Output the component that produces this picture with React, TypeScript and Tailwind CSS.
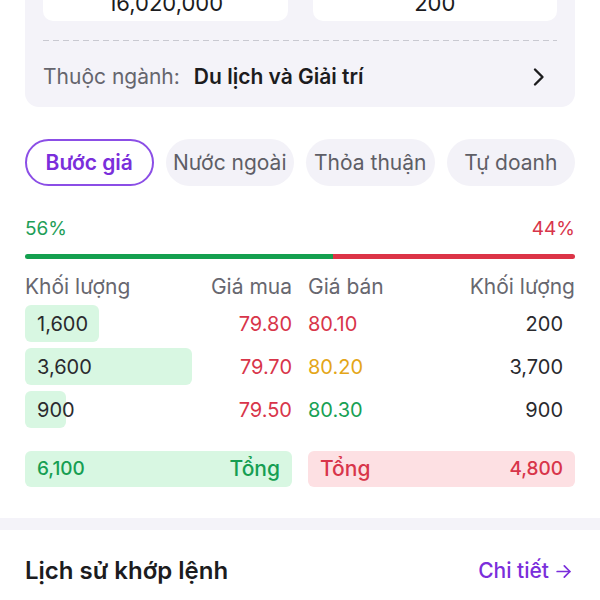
import React from "react";

const rows = [
  { bv: "1,600", bw: 74, bp: "79.80", sp: "80.10", spc: "text-[#d8354a]", sv: "200" },
  { bv: "3,600", bw: 167, bp: "79.70", sp: "80.20", spc: "text-[#e4a618]", sv: "3,700" },
  { bv: "900", bw: 41, bp: "79.50", sp: "80.30", spc: "text-[#17a154]", sv: "900" },
];

const tabs = ["Bước giá", "Nước ngoài", "Thỏa thuận", "Tự doanh"];

export default function App() {
  return (
    <div
      className="w-[600px] h-[600px] overflow-hidden bg-white"
      style={{ fontFamily: "Inter, 'Noto Sans', sans-serif" }}
    >
      {/* Top card */}
      <div className="mx-[25px] mt-[-41px] rounded-[14px] bg-[#f4f3f9] px-[18px] pt-[18px]">
        <div className="grid grid-cols-2 gap-[25px]">
          <div className="h-[44px] rounded-[10px] bg-white flex items-end justify-center pb-[7px]">
            <span className="text-[22px] leading-none text-[#1c1c1e]">16,020,000</span>
          </div>
          <div className="h-[44px] rounded-[10px] bg-white flex items-end justify-center pb-[7px]">
            <span className="text-[22px] leading-none text-[#1c1c1e]">200</span>
          </div>
        </div>
        <div className="mt-[19px] h-px bg-[linear-gradient(to_right,#c9c9d1_60%,transparent_60%)] bg-[length:10px_1px]" />
        <div className="h-[66px] pt-[5px] flex items-center">
          <span className="text-[21px] text-[#65656d]">Thuộc ngành:</span>
          <span className="ml-[14px] text-[21px] font-semibold text-[#1c1c1e]">Du lịch và Giải trí</span>
          <svg
            className="ml-auto mr-[12px]"
            width="13"
            height="20"
            viewBox="0 0 13 20"
            fill="none"
            stroke="#1c1c1e"
            strokeWidth="2.4"
            strokeLinecap="round"
            strokeLinejoin="round"
          >
            <path d="M3 2.5 L10.5 10 L3 17.5" />
          </svg>
        </div>
      </div>

      {/* Tabs */}
      <div className="mx-[25px] mt-[32px] grid grid-cols-4 gap-[12px]">
        {tabs.map((t, i) =>
          i === 0 ? (
            <div
              key={t}
              className="h-[47px] rounded-full border-2 border-[#8b4ee6] bg-white flex items-center justify-center text-[21px] font-semibold text-[#7a2edb]"
            >
              {t}
            </div>
          ) : (
            <div
              key={t}
              className="h-[47px] rounded-full bg-[#f3f2f8] flex items-center justify-center text-[21px] text-[#5e5e66]"
            >
              {t}
            </div>
          )
        )}
      </div>

      {/* Percent */}
      <div className="mx-[25px] mt-[31px] flex justify-between text-[19px] leading-[24px]">
        <span className="text-[#1e9e58]">56%</span>
        <span className="text-[#d8354a]">44%</span>
      </div>
      <div className="mx-[25px] mt-[13px] flex h-[5px]">
        <div className="h-full w-[56%] rounded-l-full bg-[#14a04f]" />
        <div className="h-full flex-1 rounded-r-full bg-[#dc3447]" />
      </div>

      {/* Header */}
      <div className="mx-[25px] mt-[16px] grid grid-cols-2 gap-x-[16px] text-[21px] leading-[24px] text-[#67676f]">
        <div className="flex justify-between">
          <span>Khối lượng</span>
          <span>Giá mua</span>
        </div>
        <div className="flex justify-between">
          <span>Giá bán</span>
          <span>Khối lượng</span>
        </div>
      </div>

      {/* Rows */}
      <div className="mx-[25px] mt-[6px] flex flex-col gap-[6px]">
        {rows.map((r) => (
          <div key={r.bv} className="grid grid-cols-2 gap-x-[16px] h-[37px] text-[20px]">
            <div className="relative flex items-center justify-between">
              <div
                className="absolute left-0 top-0 bottom-0 rounded-[6px] bg-[#d8f7e2]"
                style={{ width: `${r.bw}px` }}
              />
              <span className="relative pl-[12px] text-[#2a2a2e]">{r.bv}</span>
              <span className="relative text-[#d8354a]">{r.bp}</span>
            </div>
            <div className="flex items-center justify-between">
              <span className={r.spc}>{r.sp}</span>
              <span className="pr-[12px] text-[#2a2a2e]">{r.sv}</span>
            </div>
          </div>
        ))}
      </div>

      {/* Totals */}
      <div className="mx-[25px] mt-[23px] grid grid-cols-2 gap-x-[16px] h-[36px] font-medium">
        <div className="rounded-[6px] bg-[#d8f7e2] flex items-center justify-between px-[12px] text-[#169e52]">
          <span className="text-[19px]">6,100</span>
          <span className="text-[21px]">Tổng</span>
        </div>
        <div className="rounded-[6px] bg-[#fde0e3] flex items-center justify-between px-[12px] text-[#d8354a]">
          <span className="text-[21px]">Tổng</span>
          <span className="text-[19px]">4,800</span>
        </div>
      </div>

      {/* Separator band */}
      <div className="mt-[31px] h-[12px] bg-[#f4f3f9]" />

      {/* History title */}
      <div className="mx-[25px] mr-[27px] mt-[27px] flex items-center justify-between h-[28px]">
        <span className="text-[24px] font-semibold text-[#1c1c1e]">Lịch sử khớp lệnh</span>
        <span className="flex items-center gap-[5px] text-[21px] font-medium text-[#7a2edb]">
          Chi tiết
          <svg
            width="19"
            height="19"
            viewBox="0 0 24 24"
            fill="none"
            stroke="currentColor"
            strokeWidth="2.2"
            strokeLinecap="round"
            strokeLinejoin="round"
          >
            <path d="M4 12h16" />
            <path d="M13 5l7 7-7 7" />
          </svg>
        </span>
      </div>
    </div>
  );
}
